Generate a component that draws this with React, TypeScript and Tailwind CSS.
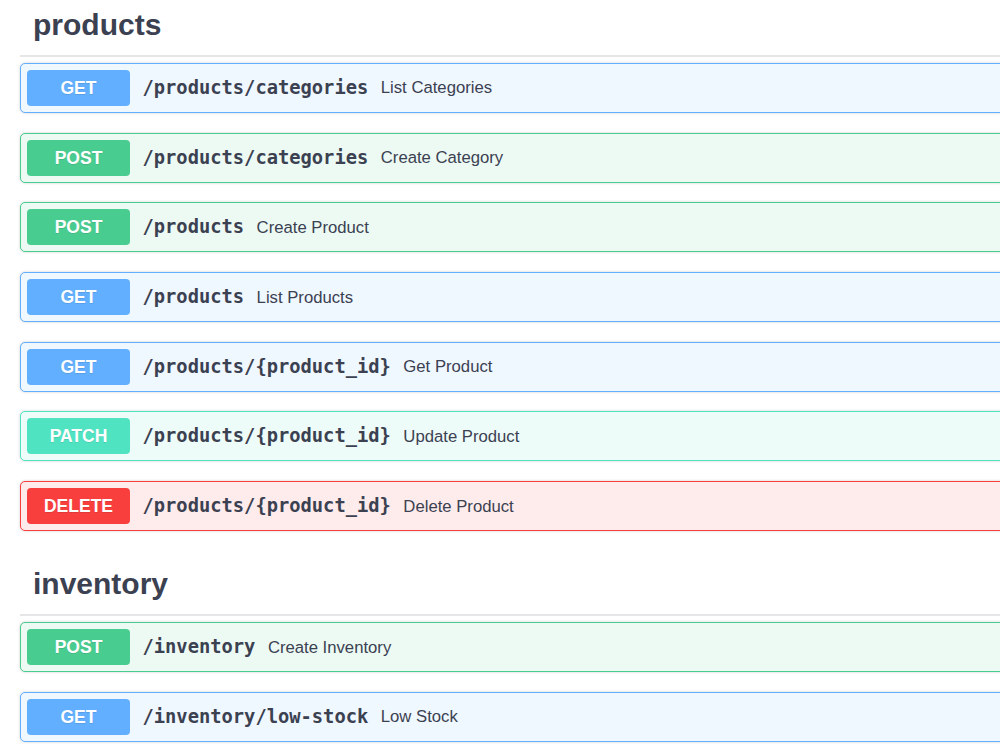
import React from "react";

type Method = "GET" | "POST" | "PATCH" | "DELETE";

const styles: Record<Method, { block: string; badge: string }> = {
  GET: { block: "bg-[#eff7ff] border-[#61affe]", badge: "bg-[#61affe]" },
  POST: { block: "bg-[#edfaf4] border-[#49cc90]", badge: "bg-[#49cc90]" },
  PATCH: { block: "bg-[#eefcf9] border-[#50e3c2]", badge: "bg-[#50e3c2]" },
  DELETE: { block: "bg-[#feecec] border-[#f93e3e]", badge: "bg-[#f93e3e]" },
};

const sections: { tag: string; ops: { method: Method; path: string; summary: string }[] }[] = [
  {
    tag: "products",
    ops: [
      { method: "GET", path: "/products/categories", summary: "List Categories" },
      { method: "POST", path: "/products/categories", summary: "Create Category" },
      { method: "POST", path: "/products", summary: "Create Product" },
      { method: "GET", path: "/products", summary: "List Products" },
      { method: "GET", path: "/products/{product_id}", summary: "Get Product" },
      { method: "PATCH", path: "/products/{product_id}", summary: "Update Product" },
      { method: "DELETE", path: "/products/{product_id}", summary: "Delete Product" },
    ],
  },
  {
    tag: "inventory",
    ops: [
      { method: "POST", path: "/inventory", summary: "Create Inventory" },
      { method: "GET", path: "/inventory/low-stock", summary: "Low Stock" },
    ],
  },
];

const Operation = ({ method, path, summary }: { method: Method; path: string; summary: string }) => {
  const s = styles[method];
  return (
    <div
      className={`flex items-center h-[50px] px-[6px] border rounded-[5px] shadow-[0_0_3px_rgba(0,0,0,0.19)] ${s.block}`}
    >
      <span
        className={`flex items-center justify-center w-[103px] h-[36px] rounded-[4px] text-white text-[17.5px] font-bold font-['Liberation_Sans',sans-serif] [text-shadow:0_1px_0_rgba(0,0,0,0.1)] ${s.badge}`}
      >
        {method}
      </span>
      <span className="px-[12.5px] text-[18.75px] font-bold text-[#3b4151] font-['DejaVu_Sans_Mono',monospace]">
        {path}
      </span>
      <span className="text-[16.7px] text-[#3b4151] font-['Liberation_Sans',sans-serif]">{summary}</span>
    </div>
  );
};

export default function App() {
  return (
    <div className="w-screen h-[749px] overflow-hidden bg-white">
      <div className="w-[1100px] pl-5 -mt-[5px] flex flex-col gap-[23px]">
        {sections.map((sec) => (
          <div key={sec.tag}>
            {/* tag header */}
            <h3 className="pt-[12px] pb-[12px] pl-[13px] mb-[6px] border-b-2 border-[#e6e6e8] text-[30px] leading-[36px] font-bold text-[#3b4151] font-['Liberation_Sans',sans-serif]">
              {sec.tag}
            </h3>
            <div className="flex flex-col gap-[19.7px]">
              {sec.ops.map((op, i) => (
                <Operation key={i} {...op} />
              ))}
            </div>
          </div>
        ))}
      </div>
    </div>
  );
}
